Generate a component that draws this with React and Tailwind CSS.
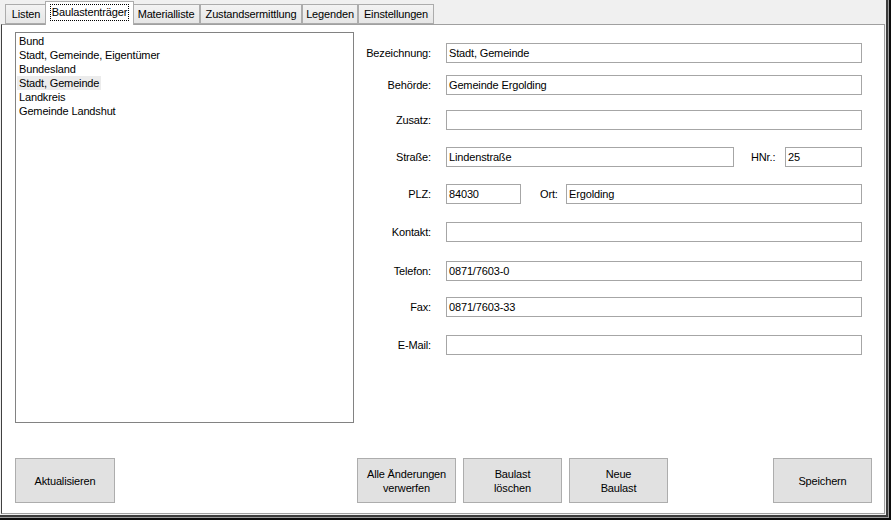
import React from "react";

const items = [
  "Bund",
  "Stadt, Gemeinde, Eigentümer",
  "Bundesland",
  "Stadt, Gemeinde",
  "Landkreis",
  "Gemeinde Landshut",
];

const Field = ({ value, className = "" }) => (
  <div
    className={`h-[20px] border border-[#a6a6a6] bg-white px-[2px] flex items-center ${className}`}
  >
    {value}
  </div>
);

const Label = ({ children }) => (
  <div className="w-[78px] shrink-0 pr-[1px] text-right">{children}</div>
);

const Tab = ({ label, w, active }) =>
  active ? (
    <div
      className={`${w} h-[24px] -mx-[2px] mb-[-1px] z-10 relative bg-white border border-b-0 border-[#acacac] flex justify-center pt-[2px]`}
    >
      <span className="border border-dotted border-black px-[1px] h-[17px] leading-[15px]">
        {label}
      </span>
    </div>
  ) : (
    <div
      className={`${w} h-[20px] bg-gradient-to-b from-[#f3f3f3] to-[#e6e6e6] border border-[#acacac] flex items-center justify-center`}
    >
      {label}
    </div>
  );

const Button = ({ children, w = "w-[99px]", className = "" }) => (
  <button
    type="button"
    className={`${w} h-[45px] shrink-0 bg-[#e1e1e1] border border-[#adadad] leading-[14px] text-center ${className}`}
  >
    {children}
  </button>
);

export default function App() {
  return (
    <div className="w-[891px] h-[520px] border-r-2 border-b-2 border-[#0c0c0c] bg-[#f0f0f0] font-['Liberation_Sans',Arial,sans-serif] text-[11px] tracking-[-0.15px] text-black">
      <div className="h-full border-r border-b border-[#9c9c9c]">
        <div className="h-full border-r-2 border-b-2 border-[#3c3c3c] pr-[1px] pb-[1px] flex flex-col">
          {/* Tabs */}
          <div className="h-[24px] shrink-0 flex items-end pl-[5px]">
            <Tab label="Listen" w="w-[42px]" />
            <Tab label="Baulastenträger" w="w-[89px]" active />
            <Tab label="Materialliste" w="w-[68px]" />
            <Tab label="Zustandsermittlung" w="w-[102px]" />
            <Tab label="Legenden" w="w-[56px]" />
            <Tab label="Einstellungen" w="w-[76px]" />
          </div>

          {/* Tab page */}
          <div className="flex-1 ml-[1px] bg-white border border-[#a0a0a0] border-l-[#404040] flex flex-col">
            <div className="flex items-start">
              {/* List */}
              <div className="ml-[13px] mt-[7px] w-[339px] h-[391px] border border-[#828282] pt-[1px] pl-[1px]">
                {items.map((it) => (
                  <div key={it} className="h-[14px] leading-[14px] flex">
                    <span
                      className={`pl-[2px] pr-[2px] ${
                        it === "Stadt, Gemeinde" ? "bg-[#ececec]" : ""
                      }`}
                    >
                      {it}
                    </span>
                  </div>
                ))}
              </div>

              {/* Form */}
              <div className="pt-[18px] flex flex-col w-[508px]">
                <div className="flex items-center gap-[14px]">
                  <Label>Bezeichnung:</Label>
                  <Field value="Stadt, Gemeinde" className="flex-1" />
                </div>
                <div className="flex items-center gap-[14px] mt-[12px]">
                  <Label>Behörde:</Label>
                  <Field value="Gemeinde Ergolding" className="flex-1" />
                </div>
                <div className="flex items-center gap-[14px] mt-[15px]">
                  <Label>Zusatz:</Label>
                  <Field value="" className="flex-1" />
                </div>
                <div className="flex items-center mt-[17px]">
                  <Label>Straße:</Label>
                  <Field value="Lindenstraße" className="w-[288px] ml-[14px]" />
                  <span className="ml-[17px]">HNr.:</span>
                  <Field value="25" className="w-[77px] ml-auto" />
                </div>
                <div className="flex items-center mt-[17px]">
                  <Label>PLZ:</Label>
                  <Field value="84030" className="w-[75px] ml-[14px]" />
                  <span className="ml-[19px]">Ort:</span>
                  <Field value="Ergolding" className="w-[296px] ml-auto" />
                </div>
                <div className="flex items-center gap-[14px] mt-[18px]">
                  <Label>Kontakt:</Label>
                  <Field value="" className="flex-1" />
                </div>
                <div className="flex items-center gap-[14px] mt-[19px]">
                  <Label>Telefon:</Label>
                  <Field value="0871/7603-0" className="flex-1" />
                </div>
                <div className="flex items-center gap-[14px] mt-[16px]">
                  <Label>Fax:</Label>
                  <Field value="0871/7603-33" className="flex-1" />
                </div>
                <div className="flex items-center gap-[14px] mt-[18px]">
                  <Label>E-Mail:</Label>
                  <Field value="" className="flex-1" />
                </div>
              </div>
            </div>

            {/* Buttons */}
            <div className="flex mt-[35px] ml-[13px]">
              <Button w="w-[100px]">Aktualisieren</Button>
              <Button className="ml-[242px]">
                Alle Änderungen
                <br />
                verwerfen
              </Button>
              <Button className="ml-[7px]">
                Baulast
                <br />
                löschen
              </Button>
              <Button className="ml-[7px]">
                Neue
                <br />
                Baulast
              </Button>
              <Button className="ml-[105px]">Speichern</Button>
            </div>
          </div>
        </div>
      </div>
    </div>
  );
}
